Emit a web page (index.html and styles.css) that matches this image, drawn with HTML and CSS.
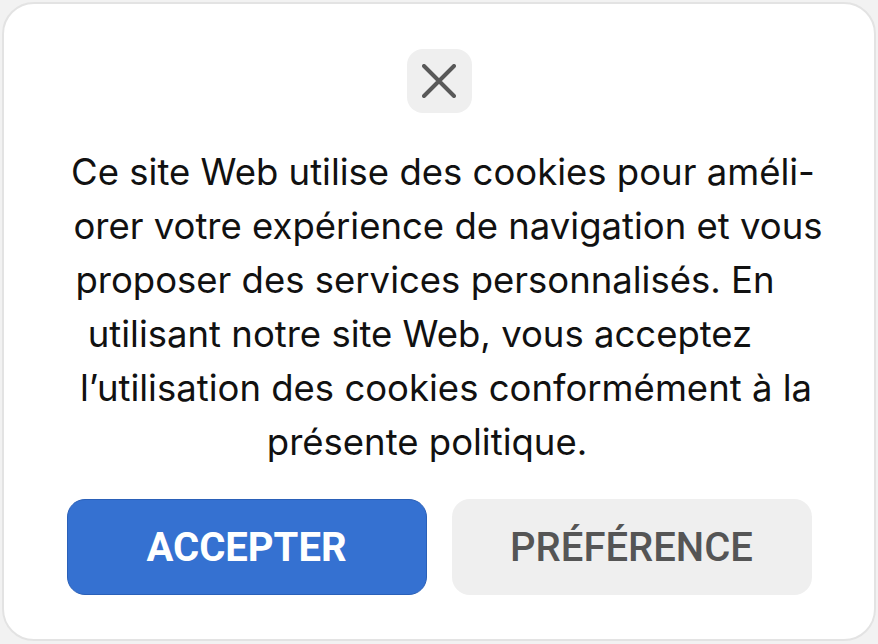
FILE: index.html
```html
<!DOCTYPE html>
<html lang="fr">
<head>
<meta charset="utf-8">
<title>Cookies</title>
<link rel="stylesheet" href="styles.css">
</head>
<body>
<div class="card">
  <button class="close" aria-label="Fermer">
    <svg width="34" height="34" viewBox="0 0 34 34"><path d="M2 2 L32 32 M32 2 L2 32" stroke="#585858" stroke-width="4" stroke-linecap="round" fill="none"/></svg>
  </button>
  <p class="message">
    <span class="line l1">Ce site Web utilise des cookies pour améli-</span>
    <span class="line l2">orer votre expérience de navigation et vous</span>
    <span class="line l3">proposer des services personnalisés. En</span>
    <span class="line l4">utilisant notre site Web, vous acceptez</span>
    <span class="line l5">l’utilisation des cookies conformément à la</span>
    <span class="line l6">présente politique.</span>
  </p>
  <div class="actions">
    <button class="btn accept">ACCEPTER</button>
    <button class="btn pref">PRÉFÉRENCE</button>
  </div>
</div>
</body>
</html>
```
FILE: styles.css
```css
html, body { margin: 0; padding: 0; }
body {
  background: #f2f2f2;
  width: 878px;
  height: 644px;
  font-family: Inter, Roboto, "Liberation Sans", sans-serif;
}
.card {
  box-sizing: border-box;
  margin: 2px 2px 0 2px;
  height: 639px;
  background: #fff;
  border: 2px solid #e3e3e3;
  border-radius: 32px;
  display: flex;
  flex-direction: column;
  align-items: center;
  padding-top: 45px;
}
.close {
  width: 65px;
  height: 64px;
  border: none;
  border-radius: 16px;
  background: #efefef;
  display: flex;
  align-items: center;
  justify-content: center;
  padding: 0;
}
.message {
  margin: 32px 0 0 0;
  width: 100%;
  text-align: center;
  font-size: 36.5px;
  line-height: 54px;
  color: #111;
}
.line { display: block; white-space: nowrap; }
.l1 { padding-left: 8px; }
.l2 { padding-left: 18px; }
.l3 { padding-right: 28px; }
.l4 { padding-right: 38px; }
.l5 { padding-left: 14px; }
.l6 { padding-right: 24px; }
.actions {
  display: flex;
  gap: 25px;
  margin-top: 30px;
}
.btn {
  width: 360px;
  height: 96px;
  border-radius: 18px;
  font-family: Roboto, "Liberation Sans", sans-serif;
  font-size: 40px;
  padding: 0;
}
.accept {
  background: #3571d1;
  border: 1px solid #2a60b8;
  color: #fff;
  font-weight: 700;
}
.pref {
  background: #efefef;
  border: none;
  color: #555;
  font-weight: 500;
}
```
